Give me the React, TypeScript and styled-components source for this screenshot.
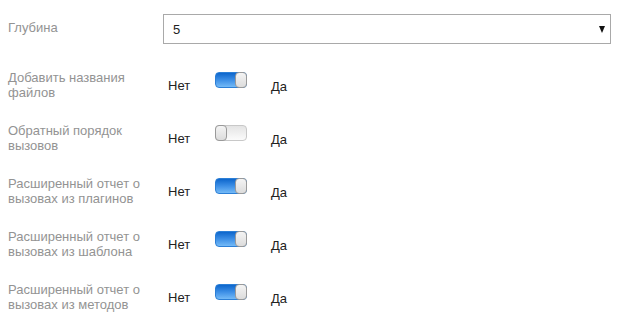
import React from "react";
import styled, { createGlobalStyle } from "styled-components";

const GlobalStyle = createGlobalStyle`
  body {
    margin: 0;
    background: #ffffff;
    font-family: "Liberation Sans", Arial, sans-serif;
  }
`;

const Form = styled.div`
  padding: 14px 6px 0 8px;
  display: flex;
  flex-direction: column;
  gap: 23px;
`;

const Row = styled.div<{ $first?: boolean }>`
  display: grid;
  grid-template-columns: 155px 1fr;
  margin-bottom: ${(p) => (p.$first ? "3px" : "0")};
`;

const Label = styled.div<{ $pad?: number }>`
  font-size: 13px;
  line-height: 15px;
  color: #939393;
  width: 148px;
  padding-top: ${(p) => p.$pad ?? 0}px;
`;

const SelectBox = styled.div`
  height: 30px;
  box-sizing: border-box;
  border: 1px solid #a9a9a9;
  background: #fff;
  display: flex;
  align-items: center;
  justify-content: space-between;
  padding: 0 5px 0 9px;
  font-size: 13px;
  color: #222;
`;

const Arrow = styled.span`
  width: 0;
  height: 0;
  border-left: 3.5px solid transparent;
  border-right: 3.5px solid transparent;
  border-top: 7px solid #111;
  margin-top: 1px;
`;

const Controls = styled.div`
  display: flex;
  align-items: flex-start;
  padding-left: 5px;
`;

const Word = styled.span<{ $top: number; $w: number; $left?: number }>`
  font-size: 13px;
  line-height: 15px;
  color: #222;
  padding-top: ${(p) => p.$top}px;
  padding-left: ${(p) => p.$left ?? 0}px;
  width: ${(p) => p.$w}px;
`;

const Switch = styled.div<{ $on: boolean }>`
  position: relative;
  margin-top: 2px;
  width: 32px;
  height: 16px;
  box-sizing: border-box;
  border-radius: 4px;
  border: 1px solid ${(p) => (p.$on ? "#2c7fd6" : "#c8c8c8")};
  background: ${(p) =>
    p.$on
      ? "linear-gradient(#0d66cc, #3d8fe6 50%, #74baf7)"
      : "linear-gradient(#e4e4e4, #fbfbfb)"};
`;

const Knob = styled.div<{ $on: boolean }>`
  position: absolute;
  top: -1px;
  ${(p) => (p.$on ? "right: -1px;" : "left: -1px;")}
  width: 12px;
  height: 16px;
  box-sizing: border-box;
  border-radius: 4px;
  border: 1px solid #9a9a9a;
  background: linear-gradient(#f4f4f4, #dcdcdc);
`;

const toggles = [
  { label: "Добавить названия файлов", on: true },
  { label: "Обратный порядок вызовов", on: false },
  { label: "Расширенный отчет о вызовах из плагинов", on: true },
  { label: "Расширенный отчет о вызовах из шаблона", on: true },
  { label: "Расширенный отчет о вызовах из методов", on: true },
];

export default function App() {
  return (
    <>
      <GlobalStyle />
      <Form>
        <Row $first>
          <Label $pad={6}>Глубина</Label>
          <SelectBox>
            <span>5</span>
            <Arrow />
          </SelectBox>
        </Row>
        {toggles.map((t) => (
          <Row key={t.label}>
            <Label>{t.label}</Label>
            <Controls>
              <Word $top={8} $w={47}>Нет</Word>
              <Switch $on={t.on}>
                <Knob $on={t.on} />
              </Switch>
              <Word $top={9} $w={40} $left={24}>
                Да
              </Word>
            </Controls>
          </Row>
        ))}
      </Form>
    </>
  );
}
